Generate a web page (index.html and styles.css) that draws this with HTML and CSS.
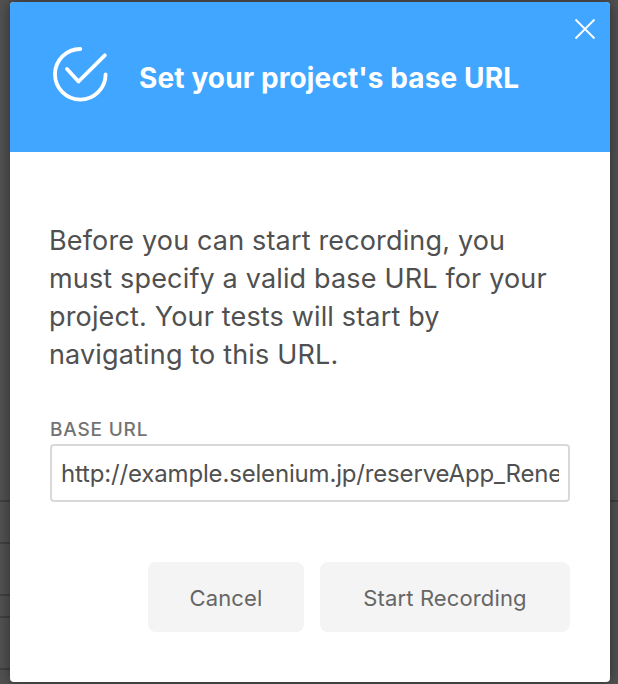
FILE: index.html
```html
<!DOCTYPE html>
<html lang="en"><head><meta charset="utf-8"><title>Base URL</title><link rel="stylesheet" href="styles.css"></head>
<body>
<main class="modal">
<header class="header">
<svg class="logo" viewBox="0 0 56 56" width="56" height="56"><path d="M28.3 3A25.3 25.3 0 1 0 53.6 28.3M15 23l11.5 12.5L52.8 9.3"/></svg>
<h1>Set your project's base URL</h1>
<button class="close" aria-label="Close"><svg viewBox="0 0 22 22" width="22" height="22"><path d="M1.5 1.5l19 19M20.5 1.5l-19 19"/></svg></button>
</header>
<form class="content">
<p>Before you can start recording, you must specify a valid base URL for your project. Your tests will start by navigating to this URL.</p>
<label for="url">BASE URL</label>
<input class="field" id="url" value="http://example.selenium.jp/reserveApp_Renewal/">
<div class="actions"><button type="button" class="cancel">Cancel</button><button type="button" class="start">Start Recording</button></div>
</form>
</main>
</body></html>
```
FILE: styles.css
```css
* { box-sizing: border-box; }
body {
  margin: 0; height: 684px; padding: 2px 8px 2px 10px; overflow: hidden;
  background:
    linear-gradient(#404040, #404040) 0 500px / 100% 2px no-repeat,
    linear-gradient(#404040, #404040) 0 542px / 10px 2px no-repeat,
    linear-gradient(#404040, #404040) 0 594px / 10px 2px no-repeat,
    linear-gradient(#404040, #404040) 0 616px / 10px 2px no-repeat,
    linear-gradient(#404040, #404040) 0 668px / 10px 2px no-repeat,
    #525252;
  font-family: Inter, sans-serif; color: #505050;
}
.modal { height: 680px; background: #fff; border-radius: 4px; overflow: hidden; box-shadow: 0 0 14px #0007; }
.header { position: relative; display: flex; height: 150px; padding: 44px 0 0 42px; background: #40a6ff; color: #fff; }
svg { fill: none; stroke: #fff; }
.logo { stroke-width: 3.8; stroke-linecap: round; stroke-linejoin: round; }
h1 { margin: 11px 0 0 31px; font-weight: 700; font-size: 28px; line-height: 42px; letter-spacing: .12px; white-space: nowrap; }
button { border: 0; font: inherit; color: #666; }
.close { position: absolute; top: 16px; right: 14px; padding: 0; width: 22px; height: 22px; background: none; }
.close svg { display: block; stroke-width: 1.8; }
.content { padding: 70px 40px 0; }
p { margin: 0 0 0 -1px; font-size: 27px; line-height: 38px; letter-spacing: .16px; }
label { display: block; margin-top: 43px; font-size: 19px; line-height: 26px; font-weight: 500; color: #737373; letter-spacing: .8px; }
.field { display: block; width: 100%; height: 58px; margin-top: 1px; padding: 0 9px; border: 2px solid #d9d9d9; border-radius: 4px; font: 24px Inter, sans-serif; letter-spacing: -.17px; color: #505050; background: #fff; }
.actions { display: flex; justify-content: flex-end; gap: 16px; margin-top: 60px; }
.actions button { height: 70px; border-radius: 8px; background: #f4f4f4; font-size: 22px; letter-spacing: .13px; padding: 1px 0 0; }
.cancel { width: 156px; }
.start { width: 250px; }
```
